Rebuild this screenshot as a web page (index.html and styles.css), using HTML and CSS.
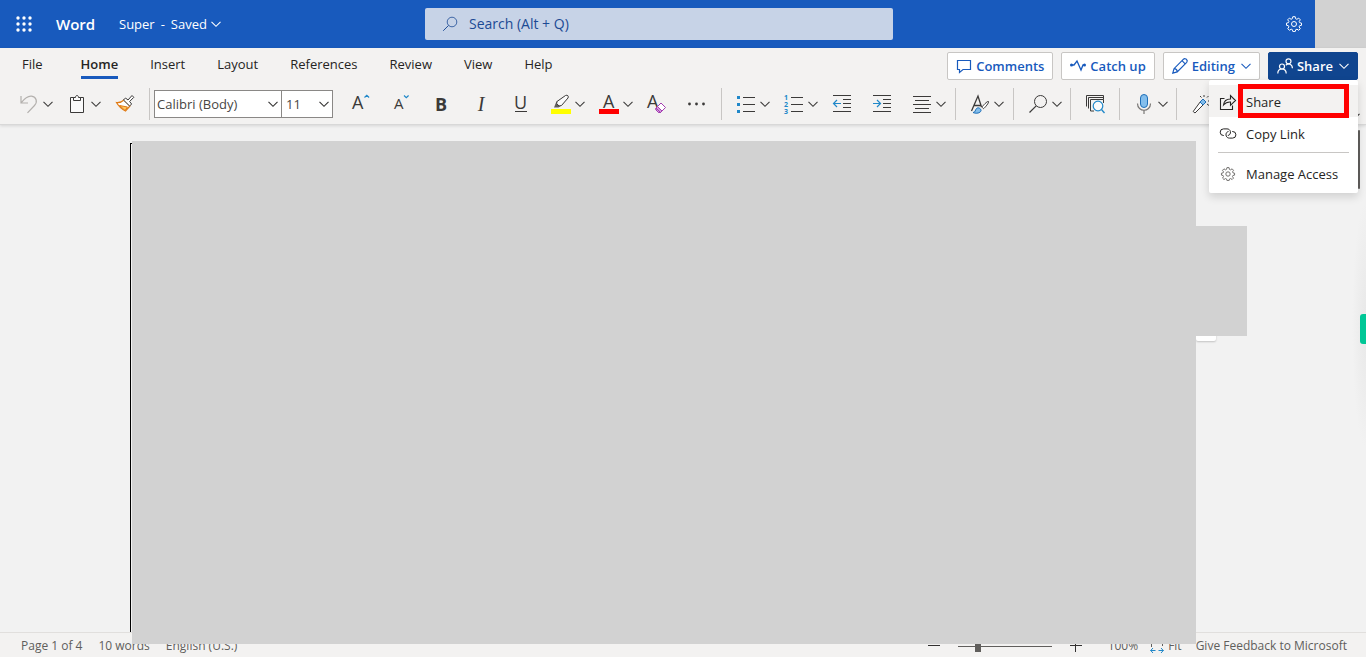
FILE: index.html
```
<!DOCTYPE html>
<html lang="en">
<head>
<meta charset="utf-8">
<title>Super - Word</title>
<link rel="stylesheet" href="styles.css">
</head>
<body>
<svg class="defs" aria-hidden="true">
  <symbol id="chev" viewBox="0 0 10 10"><path d="M.5 2.800L5 7.300l4.500-4.500" fill="none" stroke="currentColor" stroke-width="1.100"/></symbol>
  <symbol id="lens" viewBox="0 0 20 20"><circle cx="12.500" cy="7.500" r="6" fill="none" stroke="currentColor"/><path d="M8.200 11.800L1.500 18.500" fill="none" stroke="currentColor" stroke-width="1.200"/></symbol>
  <symbol id="gear" viewBox="0 0 16 16"><g fill="none" stroke="currentColor"><circle cx="8" cy="8" r="2.500"/><path d="M6.800 .7h2.400l.4 2 1.300.6 1.800-1.200 1.600 1.700-1.100 1.700.5 1.200 1.800.4v2.200l-1.900.4-.5 1.200 1.200 1.800-1.600 1.600-1.700-1.100-1.300.5-.5 1.900H6.900l-.5-1.900-1.200-.5-1.800 1.100-1.600-1.600 1.100-1.800-.5-1.200-1.900-.4V7.100l1.900-.4.5-1.200-1.200-1.700 1.700-1.700 1.700 1.200 1.200-.6z"/></g></symbol>
</svg>

<header class="topbar">
  <div class="brand">
    <button class="launcher" aria-label="App launcher">
      <svg width="16" height="16" viewBox="0 0 16 16" fill="#fff"><circle cx="2" cy="2" r="1.700"/><circle cx="8" cy="2" r="1.700"/><circle cx="14" cy="2" r="1.700"/><circle cx="2" cy="8" r="1.700"/><circle cx="8" cy="8" r="1.700"/><circle cx="14" cy="8" r="1.700"/><circle cx="2" cy="14" r="1.700"/><circle cx="8" cy="14" r="1.700"/><circle cx="14" cy="14" r="1.700"/></svg>
    </button>
    <a class="app" href="#">Word</a>
    <button class="doc-name"><span>Super</span><span>-</span><span>Saved</span><svg width="10" height="10"><use href="#chev"/></svg></button>
  </div>
  <label class="search"><svg width="16" height="16"><use href="#lens"/></svg><input type="search" placeholder="Search (Alt + Q)" aria-label="Search"></label>
  <div class="account">
    <button class="settings" aria-label="Settings"><svg width="16" height="16"><use href="#gear"/></svg></button>
    <div class="avatar"></div>
  </div>
</header>

<div class="ribbon">
  <div class="tab-row">
    <nav class="tabs">
      <a class="tab file" href="#">File</a>
      <a class="tab active" href="#">Home</a>
      <a class="tab" href="#">Insert</a>
      <a class="tab" href="#">Layout</a>
      <a class="tab" href="#">References</a>
      <a class="tab" href="#">Review</a>
      <a class="tab" href="#">View</a>
      <a class="tab" href="#">Help</a>
    </nav>
    <div class="actions">
      <button class="action"><svg width="16" height="16" viewBox="0 0 16 16"><path d="M1.500 2.500h13v9H7l-3.500 3v-3h-2z" fill="none" stroke="currentColor" stroke-width="1.200"/></svg>Comments</button>
      <button class="action"><svg width="16" height="16" viewBox="0 0 16 16"><path d="M1 7h3l3-4 4 9 2-5h2" fill="none" stroke="currentColor" stroke-width="1.300"/><circle cx="1.500" cy="7" r="1.500" fill="currentColor"/><circle cx="14.500" cy="7" r="1.500" fill="currentColor"/></svg>Catch up</button>
      <button class="action"><svg width="16" height="16" viewBox="0 0 16 16"><path d="M.8 15.200l1.200-4.500L11.500 1.200c1-.9 2.400-.4 3 .3.700.7 1 2 .2 2.900L5.200 13.900zM10 2.700l3.200 3.200M2 10.700c1.800 0 3.100 1.300 3.200 3.200" fill="none" stroke="currentColor" stroke-width="1.200"/></svg>Editing<svg class="drop" width="10" height="10"><use href="#chev"/></svg></button>
      <div class="share-wrap">
        <button class="action primary" aria-expanded="true"><svg width="16" height="16" viewBox="0 0 16 16"><g fill="none" stroke="currentColor" stroke-width="1.200"><circle cx="5" cy="8.500" r="2.500"/><path d="M.8 15.500c0-6 8.400-6 8.400 0"/><circle cx="11.500" cy="3.300" r="2.500"/><path d="M8.800 7.200c2.500-2.300 6.600-1.200 6.600 3"/></g></svg>Share<svg class="drop" width="10" height="10"><use href="#chev"/></svg></button>
        <div class="menu" role="menu">
          <button class="menu-item current" role="menuitem"><svg width="18" height="18" viewBox="0 0 18 18"><path d="M5.500 5.500h-4v11h12v-4M4.500 12c.5-4.200 3-6 7-6V2.500l5 5-5 4.800V9c-3-.2-5 .7-7 3z" fill="none" stroke="currentColor" stroke-width="1.100"/></svg><span>Share</span></button>
          <button class="menu-item" role="menuitem"><svg width="18" height="18" viewBox="0 0 18 18"><path d="M5 10.500H4.500a3.300 3.300 0 010-6.600H8c4.500 0 4.500 6.200.8 6.600M13 6.500h.6a3.300 3.300 0 010 6.600H10.500C6 13.100 6 7 9.500 6.500" fill="none" stroke="currentColor"/></svg><span>Copy Link</span></button>
          <hr>
          <button class="menu-item" role="menuitem"><svg class="gear" width="14" height="14"><use href="#gear"/></svg><span>Manage Access</span></button>
          <div class="highlight"></div>
        </div>
      </div>
    </div>
  </div>

  <div class="tools" role="toolbar">
    <button class="split muted" aria-label="Undo"><svg width="20" height="20" viewBox="0 0 20 20"><path d="M2 2v7h7M2.300 8.700C6 4 9 1.800 12.500 2.200c5 .6 6.300 5.800 3 9.300L8.500 18.800" fill="none" stroke="currentColor" stroke-width="1.200"/></svg><svg class="drop" width="10" height="10"><use href="#chev"/></svg></button>
    <button class="split" aria-label="Paste"><svg width="20" height="20" viewBox="0 0 20 20"><path d="M7 3.500H3.500v15h13v-15H13" fill="#fafafa" stroke="currentColor"/><path d="M6.500 6.500v-3h2c0-2.700 3-2.700 3 0h2v3z" fill="#fafafa" stroke="currentColor"/></svg><svg class="drop" width="10" height="10"><use href="#chev"/></svg></button>
    <button class="tool" aria-label="Format painter"><svg width="20" height="20" viewBox="0 0 20 20"><path d="M1.500 8.500c3 .2 5.500-.5 7.500-2.500l6 6-4.500 5C6.500 15 3.500 12 1.500 8.500z" fill="#fff" stroke="#e07a14" stroke-width="1.200"/><path d="M4.500 11.500l8 1.500-2.500 3.500z" fill="#ffc75f" stroke="#e07a14"/><path d="M8.500 6l2-2 2.500 2 4-4.500 1.800 1.800-4.200 4.200 2 2.500-2 2z" fill="#fff" stroke="#3b3a39"/></svg></button>
    <span class="sep"></span>
    <span class="combo family"><select aria-label="Font"><option>Calibri (Body)</option></select><svg width="10" height="10"><use href="#chev"/></svg></span>
    <span class="combo size"><select aria-label="Font size"><option>11</option></select><svg width="10" height="10"><use href="#chev"/></svg></span>
    <button class="tool" aria-label="Grow font"><svg width="20" height="20" viewBox="0 0 20 20"><text class="letter large" x="1" y="15">A</text><path d="M13.500 3.500l2.300-2.200 2.300 2.200" fill="none" stroke="#2088c9" stroke-width="1.200"/></svg></button>
    <button class="tool" aria-label="Shrink font"><svg width="20" height="20" viewBox="0 0 20 20"><text class="letter small" x="3" y="15">A</text><path d="M13 1.500l2.300 2.200 2.300-2.200" fill="none" stroke="#2088c9" stroke-width="1.200"/></svg></button>
    <button class="tool bold">B</button>
    <button class="tool italic">I</button>
    <button class="tool" aria-label="Underline"><svg width="20" height="20" viewBox="0 0 20 20"><text class="letter large" x="3" y="15">U</text><path d="M4 17.500h12" stroke="currentColor"/></svg></button>
    <button class="split" aria-label="Highlight colour"><svg width="20" height="20" viewBox="0 0 20 20"><path d="M0 15h20v5H0z" fill="#ff0"/><path d="M3 13.500l2.500-6.200 4.500 4.500-2.500 1.700z" fill="#605e5c"/><path d="M6 7.500l8.500-6c2-1 3.500.8 2.500 2.500l-6.500 7.500-2.500.5-2.300-2.500z" fill="#fafafa" stroke="currentColor"/></svg><svg class="drop" width="10" height="10"><use href="#chev"/></svg></button>
    <button class="split" aria-label="Font colour"><svg width="20" height="20" viewBox="0 0 20 20"><text class="letter large" x="4" y="14">A</text><path d="M0 15h20v5H0z" fill="red"/></svg><svg class="drop" width="10" height="10"><use href="#chev"/></svg></button>
    <button class="tool" aria-label="Clear formatting"><svg width="20" height="20" viewBox="0 0 20 20"><text class="letter large" x="0" y="14">A</text><path d="M9 14l5-5 4.500 4.500-5 5h-2L9 16z" fill="#fff" stroke="#a33fb1"/><path d="M9 14l4.500 4.500h-2L9 16zM10.500 12.500l4.500 4.500-1.500 1.500L9 14z" fill="#d59ade" stroke="#a33fb1"/></svg></button>
    <button class="tool" aria-label="More font options"><svg width="20" height="20" viewBox="0 0 20 20" fill="currentColor"><circle cx="2.500" cy="10" r="1.400"/><circle cx="9.500" cy="10" r="1.400"/><circle cx="16.500" cy="10" r="1.400"/></svg></button>
    <span class="sep"></span>
    <button class="split" aria-label="Bullets"><svg width="20" height="20" viewBox="0 0 20 20"><path d="M1 2h3v3H1zM1 9h3v3H1zM1 16h3v3H1z" fill="#2088c9"/><path d="M7 3.500h12M7 10.500h12M7 17.500h12" stroke="currentColor"/></svg><svg class="drop" width="10" height="10"><use href="#chev"/></svg></button>
    <button class="split" aria-label="Numbering"><svg width="20" height="20" viewBox="0 0 20 20"><text class="digit" x="0" y="6">1</text><text class="digit" x="0" y="13">2</text><text class="digit" x="0" y="20">3</text><path d="M7 3.500h12M7 10.500h12M7 17.500h12" stroke="currentColor"/></svg><svg class="drop" width="10" height="10"><use href="#chev"/></svg></button>
    <button class="tool" aria-label="Decrease indent"><svg width="20" height="20" viewBox="0 0 20 20"><path d="M1 1.500h18M11 5.500h8M11 9.500h8M11 13.500h8M1 17.500h18" stroke="currentColor"/><path d="M9 9.500H1.500M5 6L1.500 9.500 5 13" fill="none" stroke="#2088c9" stroke-width="1.200"/></svg></button>
    <button class="tool" aria-label="Increase indent"><svg width="20" height="20" viewBox="0 0 20 20"><path d="M1 1.500h18M11 5.500h8M11 9.500h8M11 13.500h8M1 17.500h18" stroke="currentColor"/><path d="M1 9.500h7.500M5 6l3.500 3.500L5 13" fill="none" stroke="#2088c9" stroke-width="1.200"/></svg></button>
    <button class="split" aria-label="Alignment"><svg width="20" height="20" viewBox="0 0 20 20"><path d="M1 2.500h18M3 6.500h14M1 10.500h18M3 14.500h14M1 18.500h18" stroke="currentColor"/></svg><svg class="drop" width="10" height="10"><use href="#chev"/></svg></button>
    <span class="sep wide"></span>
    <button class="split" aria-label="Styles"><svg width="20" height="20" viewBox="0 0 20 20"><path d="M1.500 17L8 2l3.500 11M4 11.500h7" fill="none" stroke="currentColor" stroke-width="1.300"/><path d="M18.500 7.500c-1-.8-6 4.500-6.500 5.700l1.500 1.500c1.500-1 5.800-6.200 5-7.200z" fill="#fff" stroke="currentColor"/><path d="M3 18.500c2.500 0 2-2.500 3.500-4 2-2 6 1 4 3.200-1.700 2-5.500 1.800-7.500.8z" fill="#83beec" stroke="#1e6fb8"/></svg><svg class="drop" width="10" height="10"><use href="#chev"/></svg></button>
    <span class="sep wide"></span>
    <button class="split" aria-label="Find"><svg width="20" height="20"><use href="#lens"/></svg><svg class="drop" width="10" height="10"><use href="#chev"/></svg></button>
    <span class="sep"></span>
    <button class="tool" aria-label="Reuse files"><svg width="20" height="20" viewBox="0 0 20 20"><path d="M1.500 12.500v-11h17v4M3.500 14.500v-11h15M9 17H5.500V5.500h13V9" fill="none" stroke="currentColor"/><circle cx="13" cy="12" r="4.800" fill="#fafafa" stroke="#2088c9" stroke-width="1.200"/><path d="M16.500 15.500l3 3.500" stroke="#2088c9" stroke-width="1.300"/></svg></button>
    <span class="sep"></span>
    <button class="split" aria-label="Dictate"><svg width="20" height="20" viewBox="0 0 20 20"><rect x="6.500" y=".5" width="7" height="13" rx="3.500" fill="#83beec" stroke="#1e6fb8"/><path d="M3.500 9.500c0 9 13 9 13 0M10 16.500V20" fill="none" stroke="#797775" stroke-width="1.200"/></svg><svg class="drop" width="10" height="10"><use href="#chev"/></svg></button>
    <span class="sep"></span>
    <button class="tool" aria-label="Designer"><svg width="20" height="20" viewBox="0 0 20 20"><path d="M9.500 7.500l3 3L4 19l-1.800-1.500z" fill="#fff" stroke="currentColor"/><path d="M9 8l3-3 3 3-3 3z" fill="#83beec" stroke="#1e6fb8"/><path d="M13 1v2M9 2l1.500 1.500M17.500 2L16 3.500M17 7h2M16 10l2 1.500" stroke="currentColor"/></svg></button>
    <button class="collapse" aria-label="Ribbon options"><svg width="10" height="10"><use href="#chev"/></svg></button>
  </div>
</div>

<main class="workspace">
  <div class="page"><div class="cover"></div><div class="card"></div><div class="panel"></div></div>
  <div class="thumb"></div>
  <div class="side-shade"></div>
  <button class="side-tab" aria-label="Open assistant"></button>
</main>

<footer class="status">
  <div class="status-left"><span>Page 1 of 4</span><span>10 words</span><span>English (U.S.)</span></div>
  <div class="status-right">
    <button aria-label="Zoom out"><svg width="12" height="12" viewBox="0 0 12 12"><path d="M0 5.500h12" stroke="#323130"/></svg></button>
    <input class="zoom" type="range" min="0" max="100" value="20" aria-label="Zoom">
    <button aria-label="Zoom in"><svg width="12" height="12" viewBox="0 0 12 12"><path d="M0 5.500h12M5.500 0v12" stroke="#323130"/></svg></button>
    <span class="percent">100%</span>
    <button class="fit"><svg width="14" height="14" viewBox="0 0 14 14"><path d="M1.500 8V1.500h11V8" fill="none" stroke="#605e5c" stroke-dasharray="3 2"/><path d="M.5 11.500h5M8.500 11.500h5M3 9L.7 11.500 3 14M11 9l2.300 2.500L11 14" fill="none" stroke="#2088c9"/></svg>Fit</button>
    <a href="#">Give Feedback to Microsoft</a>
  </div>
</footer>
</body>
</html>
```
FILE: styles.css
```
* { box-sizing: border-box; }
body { margin: 0; min-height: 100vh; display: flex; flex-direction: column; overflow: hidden; background: #f2f2f2; color: #323130; font: 13px/20px "Open Sans", "Noto Sans", sans-serif; }
button { margin: 0; padding: 0; border: 0; background: none; color: inherit; font: inherit; }
a { color: inherit; text-decoration: none; }
svg { flex: none; overflow: visible; }
.defs { position: absolute; width: 0; height: 0; }

.topbar { display: grid; grid-template-columns: 425px minmax(200px, 468px) 1fr; align-items: center; height: 48px; background: #185abd; color: #fff; }
.brand { display: flex; align-items: center; }
.launcher { width: 48px; height: 48px; display: grid; place-items: center; }
.app { width: 71px; padding-left: 8px; font-size: 15px; font-weight: 600; }
.doc-name { display: flex; align-items: center; gap: 6px; }
.doc-name svg { margin-left: -2px; }
.search { display: flex; align-items: center; height: 32px; padding: 0 17px; gap: 11px; border-radius: 2px; background: #c7d3e7; color: #1c4a94; }
.search input { flex: 1; min-width: 0; padding: 0; border: 0; outline: 0; background: none; color: inherit; font: inherit; font-size: 14px; }
.search input::placeholder { color: inherit; opacity: 1; }
.account { display: flex; justify-content: flex-end; align-items: center; }
.settings { width: 42px; height: 48px; display: grid; place-items: center; }
.avatar { width: 51px; height: 48px; background: #d2d2d2; }

.ribbon { position: relative; z-index: 2; height: 77px; background: #f3f2f1; border-bottom: 1px solid #d8d8d8; box-shadow: 0 1px 3px rgba(0, 0, 0, .12); }
.tab-row { display: flex; justify-content: space-between; height: 36px; padding: 0 8px 0 22px; }
.tabs { display: flex; gap: 32px; }
.tab { height: 31px; padding-top: 6px; color: #252423; }
.tab.file { margin-right: 6px; }
.tab.active { font-weight: 600; border-bottom: 3px solid #185abd; }
.actions { display: flex; gap: 8px; padding-top: 4px; }
.action { height: 28px; display: flex; align-items: center; gap: 4px; padding: 0 8px; border: 1px solid #c8c6c4; border-radius: 2px; background: #fff; color: #185abd; font-weight: 600; }
.action .drop { margin-left: 2px; }
.action.primary { border-color: #10458f; background: #10458f; color: #fff; }
.share-wrap { position: relative; }

.menu { position: absolute; top: 28px; right: 0; width: 149px; padding: 5px 0 4px; border-radius: 2px; background: #fff; color: #252423; box-shadow: 0 4px 8px rgba(0, 0, 0, .14); }
.menu-item { display: flex; align-items: center; width: 100%; height: 32px; padding: 1px 0 0 10px; text-align: left; white-space: nowrap; }
.menu-item svg { width: 18px; margin-right: 9px; }
.menu-item .gear { color: #605e5c; }
.menu-item.current { background: #f3f2f1; }
.menu hr { height: 1px; margin: 3px 9px 4px; border: 0; background: #c8c6c4; }
.highlight { position: absolute; top: 4px; left: 29px; right: 9px; height: 34px; border: 5px solid #f00; pointer-events: none; }

.tools { display: flex; align-items: center; height: 40px; padding: 0 6px 0 9px; }
.tool, .split { flex: none; height: 36px; display: flex; align-items: center; color: #3b3a39; }
.tool { width: 40px; justify-content: center; }
.split { width: 48px; padding-left: 10px; gap: 4px; }
.muted { color: #b3b0ad; }
.muted .drop { color: #3b3a39; }
.sep { flex: none; width: 1px; height: 32px; margin: 0 4px; background: #c8c6c4; }
.sep.wide { margin-left: 5px; }
.collapse { display: flex; align-self: flex-end; margin-left: auto; padding-bottom: 3px; }
.combo { position: relative; flex: none; height: 28px; }
.combo select { width: 100%; height: 100%; padding: 0 2px; border: 1px solid #8a8886; border-radius: 0; background: #fff; color: #484644; font: inherit; appearance: none; }
.combo svg { position: absolute; top: 9px; right: 4px; pointer-events: none; }
.family { width: 128px; }
.size { width: 52px; margin: 0 8px 0 -1px; }
.size select { padding-left: 4px; }
.letter { fill: currentColor; font-family: "Open Sans", sans-serif; font-weight: 400; }
.large { font-size: 18px; }
.small { font-size: 15px; }
.digit { fill: #2088c9; font: 700 7px "Open Sans", sans-serif; }
.bold { font-size: 18px; font-weight: 700; }
.italic { font: italic 20px "Liberation Serif", serif; }

.workspace { position: relative; flex: 1; display: flex; }
.page { position: relative; flex: 1; margin: 18px 170px 0 130px; border: solid #000; border-width: 1px 0 0 1px; }
.cover { position: absolute; z-index: 1; top: -3px; right: 0; bottom: -12px; left: 1px; background: #d2d2d2; }
.panel { position: absolute; top: 82px; right: -51px; width: 51px; height: 110px; background: #d2d2d2; }
.card { position: absolute; top: 160px; right: -20px; width: 20px; height: 37px; border-radius: 2px; background: #fff; box-shadow: 0 1px 2px rgba(0, 0, 0, .2); }
.thumb { position: absolute; top: 5px; right: 6px; width: 2px; height: 59px; border-radius: 1px; background: #605e5c; }
.side-shade { position: absolute; top: 75px; right: 0; width: 14px; height: 250px; background: radial-gradient(ellipse at right, #e8e8e8, #f2f2f2 70%); }
.side-tab { position: absolute; top: 189px; right: 0; width: 6px; height: 30px; border-radius: 3px 0 0 3px; background: #00c796; }

.status { display: flex; justify-content: space-between; align-items: center; height: 25px; padding: 2px 19px 0 21px; border-top: 1px solid #e1dfdd; background: #f3f2f1; color: #605e5c; font-size: 12px; white-space: nowrap; }
.status-left, .status-right { display: flex; align-items: center; }
.status-left { gap: 16px; }
.status-right { gap: 14px; }
.status-right button { display: flex; align-items: center; gap: 4px; }
.zoom { appearance: none; width: 94px; height: 12px; margin: 0 4px; background: linear-gradient(#605e5c, #605e5c) center / 100% 1px no-repeat; }
.zoom::-webkit-slider-thumb { appearance: none; width: 6px; height: 12px; background: #605e5c; }
.percent { margin: 0 -2px 0 12px; }
```
